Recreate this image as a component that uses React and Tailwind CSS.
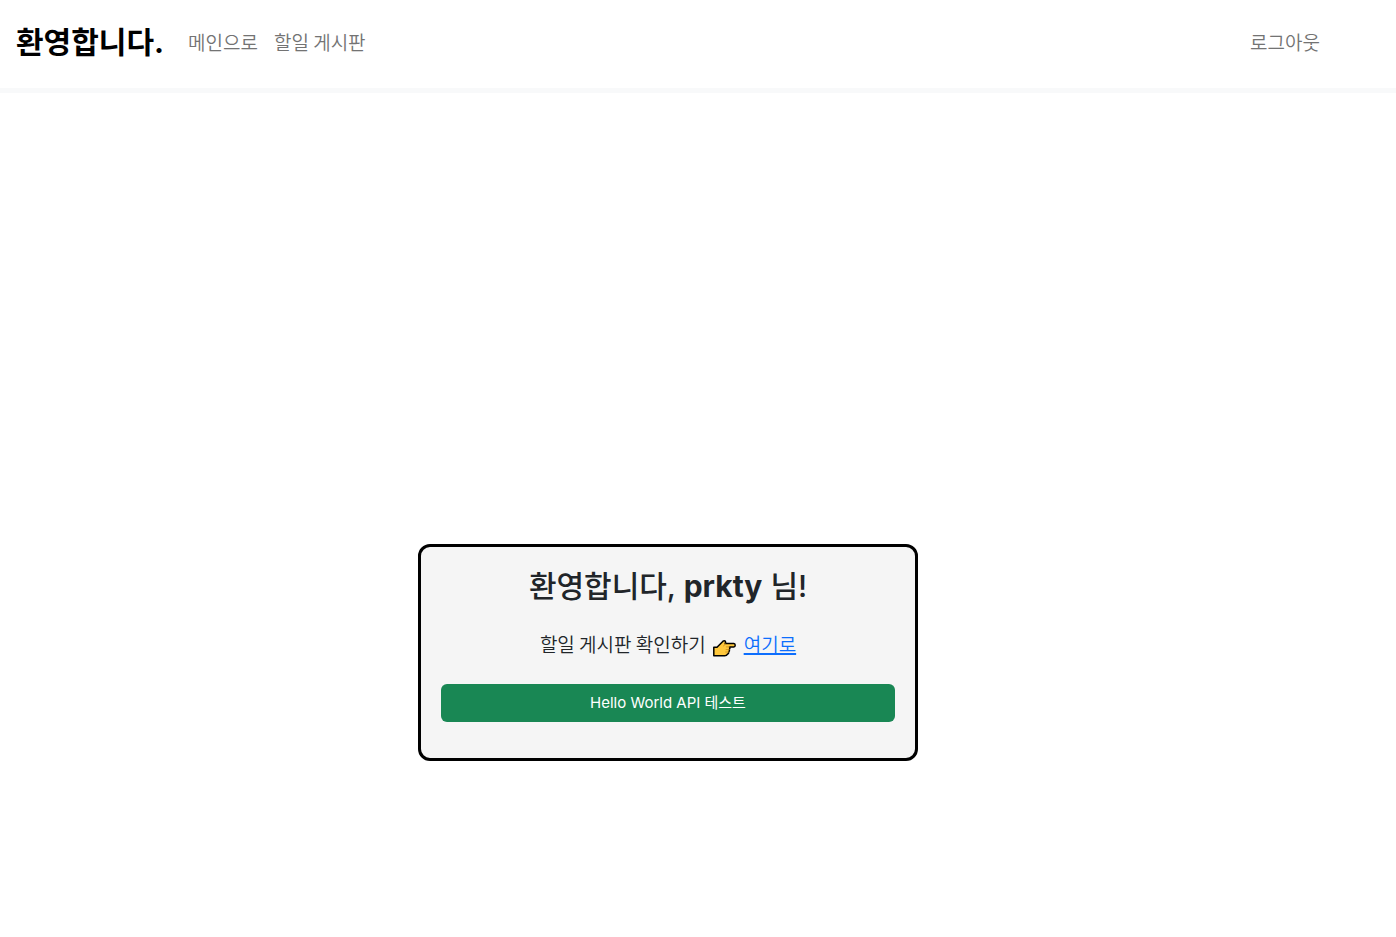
import React from "react";

/* ================= CONSTANTS ================= */

const username = "prkty";

const navLinks = [
  { label: "메인으로", href: "#main" },
  { label: "할일 게시판", href: "#todos" },
];

/* ================= COMPONENT ================= */

export default function App() {
  return (
    <div className="bg-white font-['Inter','Noto_Sans_CJK_KR',sans-serif] text-[#212529]">
      <Header />

      <main className="flex justify-center pt-[451px] pr-[60px]">
        <WelcomeCard name={username} />
      </main>
    </div>
  );
}

const Header = () => (
  <header className="flex h-[93px] items-center border-b-[5px] border-[#f8f9fa] pr-[76px] pb-1 pl-4">
    <a href="#home" className="mr-6 text-[30px] leading-[45px] font-bold text-black">
      환영합니다.
    </a>

    <nav className="flex flex-1 items-center gap-4 font-['Noto_Sans_CJK_KR',sans-serif] text-[19px] leading-[30px] font-[350] text-[#737373]">
      {navLinks.map((link) => (
        <a key={link.href} href={link.href}>
          {link.label}
        </a>
      ))}
      <button type="button" className="ml-auto">
        로그아웃
      </button>
    </nav>
  </header>
);

const WelcomeCard = ({ name }) => (
  <section className="w-full max-w-[500px] rounded-xl border-[3px] border-black bg-[#f5f5f5] p-5 text-center">
    <h1 className="mb-6 text-[30px] leading-[38px] font-medium">
      환영합니다, <strong className="font-bold">{name}</strong> 님!
    </h1>

    <p className="mb-[25px] flex items-center justify-center gap-1.5 font-['Noto_Sans_CJK_KR',sans-serif] text-[19px] leading-[30px] font-[350]">
      할일 게시판 확인하기
      <PointingHand />
      <a href="#todos" className="text-[#0d6efd] underline decoration-2">
        여기로
      </a>
    </p>

    <button
      type="button"
      className="mb-4 block h-[38px] w-full rounded-md bg-[#198754] text-[15px] leading-6 text-white"
    >
      Hello World API 테스트
    </button>
  </section>
);

const PointingHand = () => (
  <svg viewBox="0 0 26 20" className="mt-2 h-5 w-[26px]" aria-hidden="true">
    <path
      d="M1.8 9.2 H5 L11 3.2 Q12.4 2.1 13.4 3.3 Q14 4.3 13.1 5.5 H21.8 Q23.2 5.7 23.2 7.2 Q23.2 8.8 21.8 8.9 H17.5 Q18.4 10.5 17.3 11.6 Q17.9 13 16.7 14 Q16.9 15.6 15.5 16.2 Q14.7 17.8 12.7 17.8 H1.8 Z"
      fill="#ffc83d"
      stroke="#000000"
      strokeWidth="1.5"
      strokeLinejoin="round"
    />
    <path
      d="M13.1 5.5 L11.7 8 M17.5 8.9 H14.3 M17.3 11.6 H14.1 M16.7 14 H13.7"
      fill="none"
      stroke="#c98a1b"
      strokeWidth="0.8"
      strokeLinecap="round"
    />
  </svg>
);
